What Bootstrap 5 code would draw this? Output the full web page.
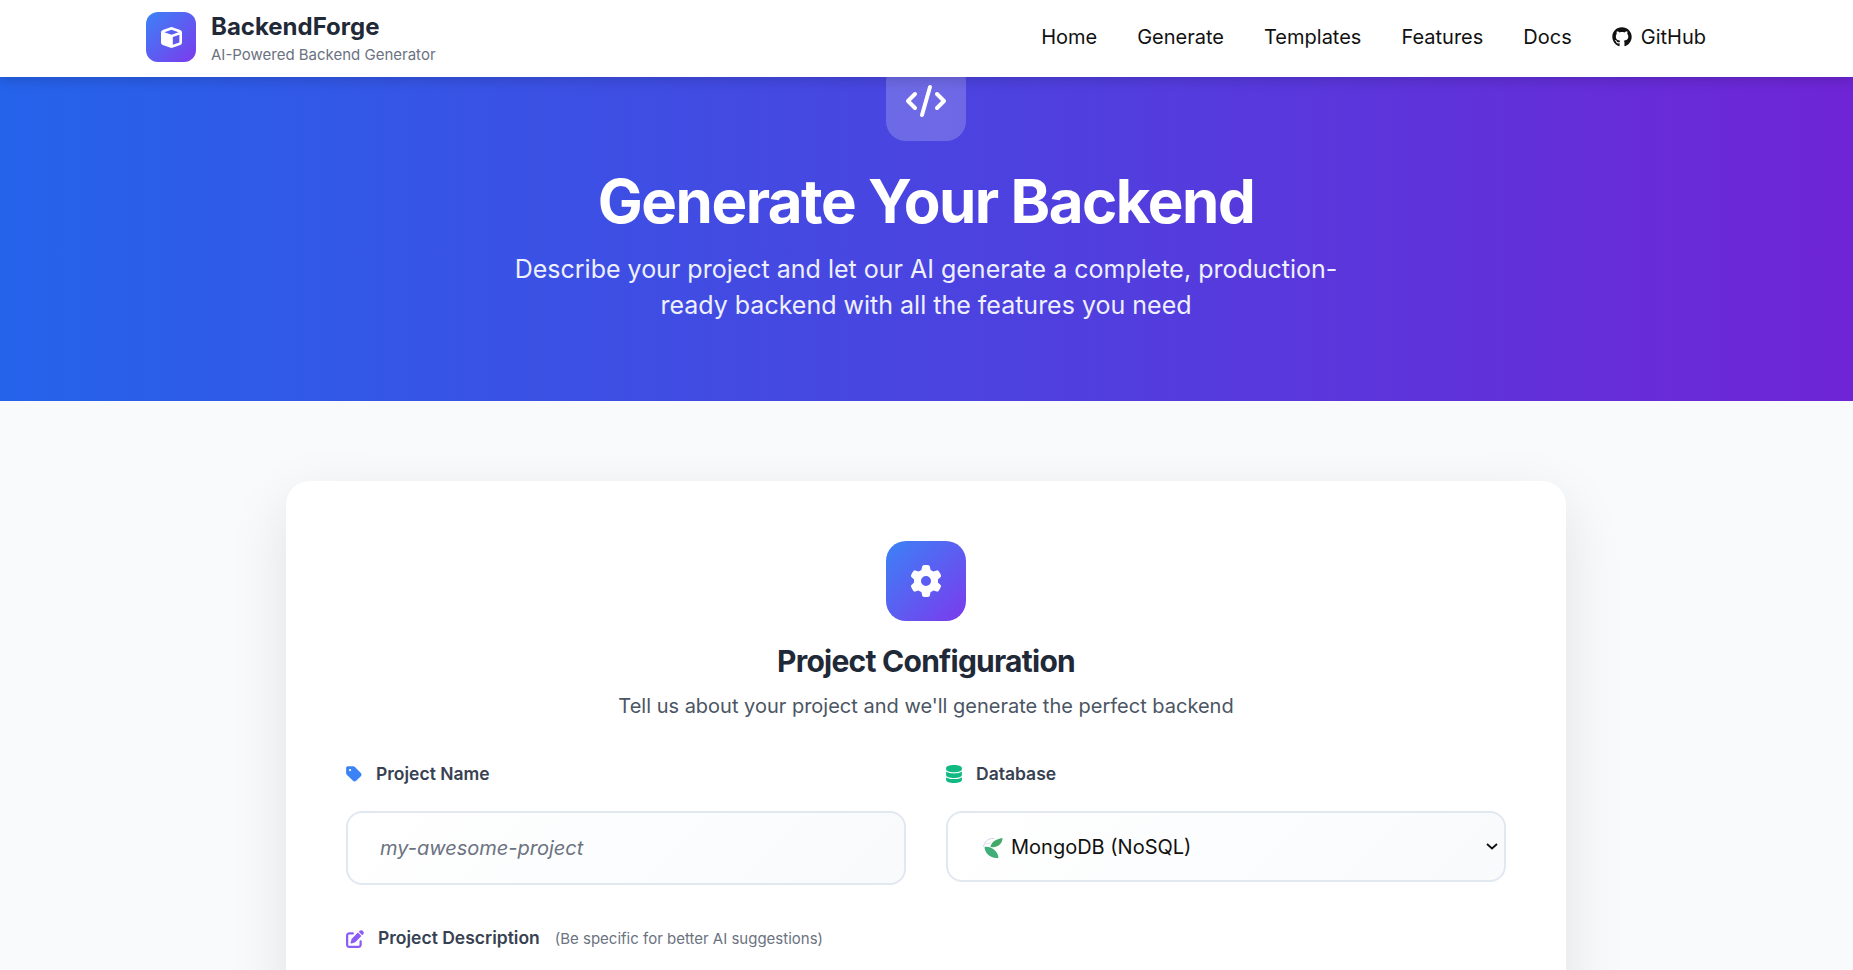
<!DOCTYPE html>
<html lang="en">
<head>
<meta charset="utf-8">
<title>BackendForge</title>
<link href="https://cdn.jsdelivr.net/npm/bootstrap@5.3.0/dist/css/bootstrap.min.css" rel="stylesheet">
<style>
html,body{height:970px;overflow:hidden}
body{font-family:Inter,"Liberation Sans",sans-serif;background:#f8fafc;color:#1f2937}
.top-bar{height:77px;background:#fff;position:relative;z-index:5;box-shadow:0 3px 12px rgba(0,0,0,.16)}
.top-inner{width:1560px;margin-left:146px;height:100%;padding-bottom:3px}
.brand-wrap{gap:15px}
.brand-block{padding-top:2px}
.logo-box{width:50px;height:50px;border-radius:12px;background:linear-gradient(135deg,#3b82f6,#7c3aed);color:#fff}
.logo-box svg{width:21px;height:21px;fill:#fff}
.brand-name{font-size:24px;font-weight:700;line-height:34px;color:#1f2937}
.brand-sub{font-size:15px;line-height:22px;color:#6b7280}
.top-nav{gap:40px}
.top-link{font-size:20px;line-height:28px;color:#111;text-decoration:none;white-space:nowrap}
.top-link svg{width:20px;height:20px;fill:#111;vertical-align:-3px;margin-right:9px}
.hero-band{height:324px;overflow:hidden;padding-right:1px;background:linear-gradient(90deg,#2563eb 0%,#6f25d5 100%);color:#fff;text-align:center}
.hero-icon{width:80px;height:80px;margin:-16px auto 0;border-radius:20px;background:rgba(255,255,255,.2)}
.hero-icon svg{width:40px;height:32px;fill:#fff}
.hero-title{font-size:60px;line-height:72px;font-weight:700;letter-spacing:-.025em;margin:24px 0 15px}
.hero-text{font-size:25px;line-height:35.5px;width:840px;margin:0 auto;color:#eef0ff}
.cfg-card{width:1280px;margin:80px 0 0 286px;background:#fff;border-radius:24px;padding:60px 60px 40px;box-shadow:0 20px 60px rgba(0,0,0,.1)}
.cfg-head{margin-bottom:42px}
.cfg-icon{width:80px;height:80px;margin:0 auto 22px;border-radius:20px;background:linear-gradient(135deg,#3b82f6,#7c3aed)}
.cfg-icon svg{width:32px;height:32px;fill:#fff}
.cfg-title{font-size:30px;line-height:36px;font-weight:700;color:#1f2937;letter-spacing:-.025em;margin:0 0 13px}
.cfg-sub{font-size:20px;line-height:28px;color:#4b5563;margin:0}
.field-head{font-size:17.5px;font-weight:600;line-height:24px;color:#374151;margin-bottom:25px;gap:14px}
.field-head svg{width:16px;height:18px;flex:none}
.field-head .icon-wide{width:18px}
.tone-blue{fill:#3b82f6}.tone-green{fill:#10b981}.tone-purple{fill:#8b5cf6}
.field-note{font-size:15px;font-weight:400;color:#6b7280;margin-left:15px}
.cfg-input{height:74px;border:2px solid #e2e8f0;border-radius:16px;background:linear-gradient(135deg,#fff,#f8fafc);font-size:20px;padding:0 32px}
.cfg-input::placeholder{color:#6b7280;font-style:italic}
.cfg-select{height:71px;padding-left:63px;color:#111;background-image:url("data:image/svg+xml,%3Csvg xmlns='http://www.w3.org/2000/svg' viewBox='0 0 12 7'%3E%3Cpath d='M1 1l5 4.5L11 1' fill='none' stroke='%23111' stroke-width='1.8'/%3E%3C/svg%3E"),linear-gradient(135deg,#fff,#f8fafc);background-repeat:no-repeat;background-position:right 6px top 30px,0 0;background-size:12px 7px,100% 100%}
.select-wrap{position:relative}
.select-leaf{position:absolute;left:37px;top:26px;width:20px;height:21px;pointer-events:none}
.cols{display:grid;grid-template-columns:560px 560px;gap:40px}
.desc-row{margin-top:41px}
</style>
</head>
<body>
<header class="top-bar">
  <div class="top-inner d-flex align-items-center justify-content-between">
    <div class="d-flex align-items-center brand-wrap">
      <div class="logo-box d-flex align-items-center justify-content-center">
        <svg viewBox="0 0 512 512"><path d="M234.5 5.7c13.9-5 29.1-5 43.1 0l192 68.6C495 83.4 512 107.5 512 134.6V377.4c0 27-17 51.2-42.5 60.3l-192 68.6c-13.9 5-29.1 5-43.1 0l-192-68.6C17 428.6 0 404.5 0 377.4V134.6c0-27 17-51.2 42.5-60.3l192-68.6zM256 66L82.3 128 256 190l173.7-62L256 66zm32 368.6l160-57.1v-188L288 246.6v188z"/></svg>
      </div>
      <div class="brand-block">
        <div class="brand-name">BackendForge</div>
        <div class="brand-sub">AI-Powered Backend Generator</div>
      </div>
    </div>
    <nav class="d-flex align-items-center top-nav">
      <a class="top-link" href="#">Home</a>
      <a class="top-link" href="#">Generate</a>
      <a class="top-link" href="#">Templates</a>
      <a class="top-link" href="#">Features</a>
      <a class="top-link" href="#">Docs</a>
      <a class="top-link" href="#"><svg viewBox="0 0 496 512"><path d="M165.9 397.4c0 2-2.3 3.6-5.2 3.6-3.3 .3-5.6-1.3-5.6-3.6 0-2 2.3-3.6 5.2-3.6 3-.3 5.6 1.3 5.6 3.6zm-31.1-4.5c-.7 2 1.3 4.3 4.3 4.9 2.6 1 5.6 0 6.2-2s-1.3-4.3-4.3-5.2c-2.6-.7-5.5 .3-6.2 2.3zm44.2-1.7c-2.9 .7-4.9 2.6-4.6 4.9 .3 2 2.9 3.3 5.9 2.6 2.9-.7 4.9-2.6 4.6-4.6-.3-1.9-3-3.2-5.9-2.9zM244.8 8C106.1 8 0 113.3 0 252c0 110.9 69.8 205.8 169.5 239.2 12.8 2.3 17.3-5.6 17.3-12.1 0-6.2-.3-40.4-.3-61.4 0 0-70 15-84.7-29.8 0 0-11.4-29.1-27.8-36.6 0 0-22.9-15.7 1.6-15.4 0 0 24.9 2 38.6 25.8 21.9 38.6 58.6 27.5 72.9 20.9 2.3-16 8.8-27.1 16-33.7-55.9-6.2-112.3-14.3-112.3-110.5 0-27.5 7.6-41.3 23.6-58.9-2.6-6.5-11.1-33.3 2.6-67.9 20.9-6.5 69 27 69 27 20-5.6 41.5-8.5 62.8-8.5s42.8 2.9 62.8 8.5c0 0 48.1-33.6 69-27 13.7 34.7 5.2 61.4 2.6 67.9 16 17.7 25.8 31.5 25.8 58.9 0 96.5-58.9 104.2-114.8 110.5 9.2 7.9 17 22.9 17 46.4 0 33.7-.3 75.4-.3 83.6 0 6.5 4.6 14.4 17.3 12.1C428.2 457.8 496 362.9 496 252 496 113.3 383.5 8 244.8 8z"/></svg>GitHub</a>
    </nav>
  </div>
</header>
<section class="hero-band">
  <div class="hero-icon d-flex align-items-center justify-content-center">
    <svg viewBox="0 0 640 512"><path d="M392.8 1.2c-17-4.9-34.7 5-39.6 22l-128 448c-4.9 17 5 34.7 22 39.6s34.7-5 39.6-22l128-448c4.9-17-5-34.7-22-39.6zm80.6 120.1c-12.5 12.5-12.5 32.8 0 45.3L562.7 256l-89.4 89.4c-12.5 12.5-12.5 32.8 0 45.3s32.8 12.5 45.3 0l112-112c12.5-12.5 12.5-32.8 0-45.3l-112-112c-12.5-12.5-32.8-12.5-45.3 0zm-306.7 0c-12.5-12.5-32.8-12.5-45.3 0l-112 112c-12.5 12.5-12.5 32.8 0 45.3l112 112c12.5 12.5 32.8 12.5 45.3 0s12.5-32.8 0-45.3L77.3 256l89.4-89.4c12.5-12.5 12.5-32.8 0-45.3z"/></svg>
  </div>
  <h1 class="hero-title">Generate Your Backend</h1>
  <p class="hero-text">Describe your project and let our AI generate a complete, production-ready backend with all the features you need</p>
</section>
<main class="cfg-card">
  <div class="text-center cfg-head">
    <div class="cfg-icon d-flex align-items-center justify-content-center">
      <svg viewBox="0 0 512 512"><path d="M495.9 166.6c3.2 8.7 .5 18.4-6.4 24.6l-43.3 39.4c1.1 8.3 1.7 16.8 1.7 25.4s-.6 17.1-1.7 25.4l43.3 39.4c6.9 6.2 9.6 15.9 6.4 24.6c-4.4 11.9-9.7 23.3-15.8 34.3l-4.7 8.1c-6.6 11-14 21.4-22.1 31.2c-5.9 7.2-15.7 9.6-24.5 6.8l-55.7-17.7c-13.4 10.3-28.2 18.9-44 25.4l-12.5 57.1c-2 9.1-9 16.3-18.2 17.8c-13.8 2.3-28 3.5-42.5 3.5s-28.7-1.2-42.5-3.5c-9.2-1.5-16.2-8.7-18.2-17.8l-12.5-57.1c-15.8-6.5-30.6-15.1-44-25.4L83.1 425.9c-8.8 2.8-18.6 .3-24.5-6.8c-8.1-9.8-15.5-20.2-22.1-31.2l-4.7-8.1c-6.1-11-11.4-22.4-15.8-34.3c-3.2-8.7-.5-18.4 6.4-24.6l43.3-39.4C64.6 273.1 64 264.6 64 256s.6-17.1 1.7-25.4L22.4 191.2c-6.9-6.2-9.6-15.9-6.4-24.6c4.4-11.9 9.7-23.3 15.8-34.3l4.7-8.1c6.6-11 14-21.4 22.1-31.2c5.9-7.2 15.7-9.6 24.5-6.8l55.7 17.7c13.4-10.3 28.2-18.9 44-25.4l12.5-57.1c2-9.1 9-16.3 18.2-17.8C227.3 1.2 241.5 0 256 0s28.7 1.2 42.5 3.5c9.2 1.5 16.2 8.7 18.2 17.8l12.5 57.1c15.8 6.5 30.6 15.1 44 25.4l55.7-17.7c8.8-2.8 18.6-.3 24.5 6.8c8.1 9.8 15.5 20.2 22.1 31.2l4.7 8.1c6.1 11 11.4 22.4 15.8 34.3zM256 336a80 80 0 1 0 0-160 80 80 0 1 0 0 160z"/></svg>
    </div>
    <h2 class="cfg-title">Project Configuration</h2>
    <p class="cfg-sub">Tell us about your project and we'll generate the perfect backend</p>
  </div>
  <div class="cols">
    <div>
      <label class="field-head d-flex align-items-center" for="pname"><svg class="tone-blue" viewBox="0 0 448 512"><path d="M0 80V229.5c0 17 6.7 33.3 18.7 45.3l176 176c25 25 65.5 25 90.5 0L418.7 317.3c25-25 25-65.5 0-90.5l-176-176c-12-12-28.3-18.7-45.3-18.7H48C21.5 32 0 53.5 0 80zm112 32a32 32 0 1 1 0 64 32 32 0 1 1 0-64z"/></svg>Project Name</label>
      <input id="pname" class="form-control cfg-input" placeholder="my-awesome-project">
    </div>
    <div>
      <label class="field-head d-flex align-items-center" for="pdb"><svg class="tone-green" viewBox="0 0 448 512"><path d="M448 80v48c0 44.2-100.3 80-224 80S0 172.2 0 128V80C0 35.8 100.3 0 224 0S448 35.8 448 80zM393.2 214.7c20.8-7.4 39.9-16.9 54.8-28.6V288c0 44.2-100.3 80-224 80S0 332.2 0 288V186.1c14.9 11.8 34 21.2 54.8 28.6C99.7 230.7 159.5 240 224 240s124.3-9.3 169.2-25.3zM0 346.1c14.9 11.8 34 21.2 54.8 28.6C99.7 390.7 159.5 400 224 400s124.3-9.3 169.2-25.3c20.8-7.4 39.9-16.9 54.8-28.6V432c0 44.2-100.3 80-224 80S0 476.2 0 432V346.1z"/></svg>Database</label>
      <div class="select-wrap">
        <select id="pdb" class="form-select cfg-input cfg-select"><option>MongoDB (NoSQL)</option></select>
        <svg class="select-leaf" viewBox="0 0 20 21"><path d="M.5 10C1 5 5 1 11 1.500" fill="none" stroke="#d5d3e6" stroke-width="1"/><path d="M2 7C4 5 5 9 8 5" fill="none" stroke="#e2e0ee" stroke-width="1"/><path d="M7.500 10C8 5 13 2 19.500 1c0 5-4 10-12 9z" fill="#43a96b"/><path d="M1.500 10c6-1 13 3 14 11C8 21.500 2 17 1.500 10z" fill="#3fae78"/></svg>
      </div>
    </div>
  </div>
  <label class="field-head d-flex align-items-center desc-row" for="pdesc"><svg class="tone-purple icon-wide" viewBox="0 0 512 512"><path d="M471.6 21.7c-21.9-21.9-57.3-21.9-79.2 0L362.3 51.7l97.9 97.9 30.1-30.1c21.9-21.9 21.9-57.3 0-79.2L471.6 21.7zm-299.2 220c-6.1 6.1-10.8 13.6-13.5 21.9l-29.6 88.8c-2.9 8.6-.6 18.1 5.8 24.6s15.9 8.7 24.6 5.8l88.8-29.6c8.2-2.7 15.7-7.4 21.9-13.5L437.7 172.3 339.7 74.3 172.4 241.7zM96 64C43 64 0 107 0 160V416c0 53 43 96 96 96H352c53 0 96-43 96-96V320c0-17.7-14.3-32-32-32s-32 14.3-32 32v96c0 17.7-14.3 32-32 32H96c-17.7 0-32-14.3-32-32V160c0-17.7 14.3-32 32-32h96c17.7 0 32-14.3 32-32s-14.3-32-32-32H96z"/></svg><span>Project Description<span class="field-note">(Be specific for better AI suggestions)</span></span></label>
</main>
</body>
</html>
